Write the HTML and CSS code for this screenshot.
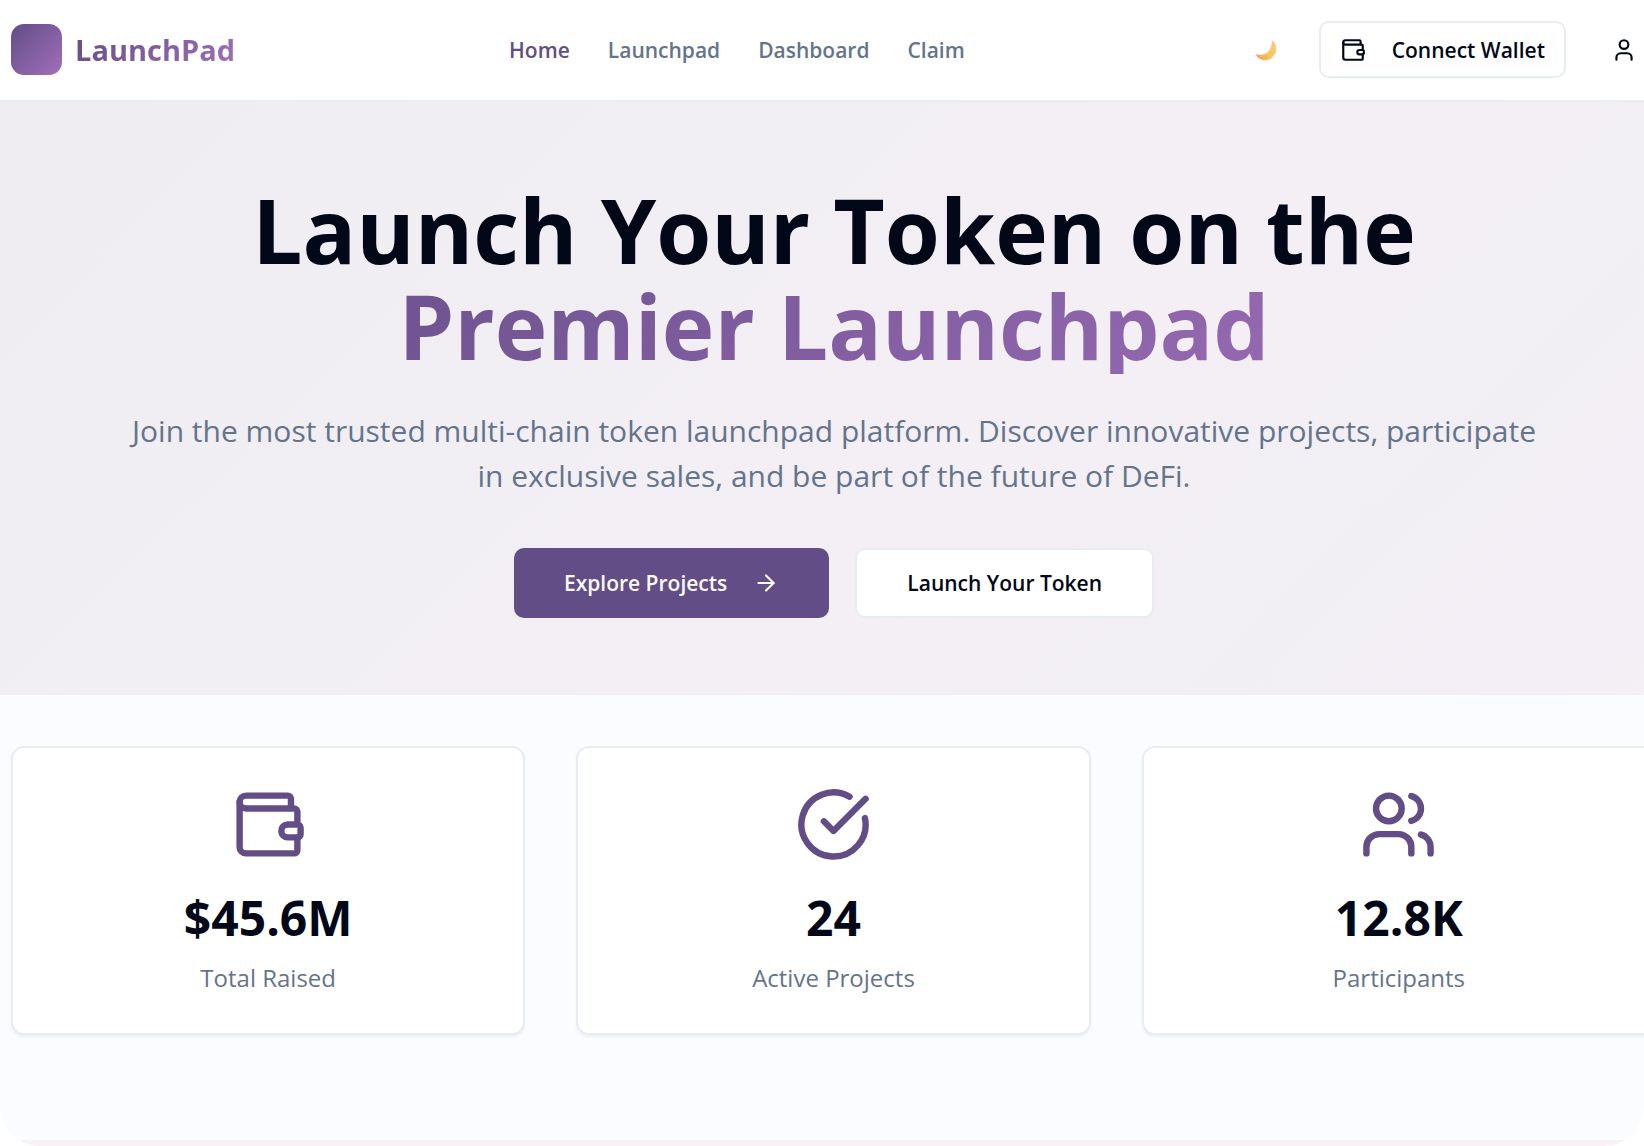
FILE: index.html
```
<!DOCTYPE html>
<html lang="en">
<head>
    <meta charset="UTF-8">
    <meta name="viewport" content="width=device-width, initial-scale=1.0">
    <title>LaunchPad</title>
    <link rel="stylesheet" href="styles.css">
</head>
<body>
    <div class="frame">
        <div class="page">
            <header class="header">
                <a href="#" class="logo">
                    <span class="logo-mark"></span>
                    <span class="logo-text gradient-text">LaunchPad</span>
                </a>
                <nav class="nav">
                    <a href="#" class="active">Home</a>
                    <a href="#">Launchpad</a>
                    <a href="#">Dashboard</a>
                    <a href="#">Claim</a>
                </nav>
                <div class="actions">
                    <button type="button" class="btn btn-ghost btn-theme" aria-label="Toggle theme">
                        <svg class="moon" viewBox="0 0 24 24">
                            <defs>
                                <linearGradient id="moonFill" x1="0" y1="1" x2="1" y2="0">
                                    <stop offset="0" stop-color="#ee9a5c"/>
                                    <stop offset="0.5" stop-color="#f9cb62"/>
                                    <stop offset="1" stop-color="#f6c98a"/>
                                </linearGradient>
                            </defs>
                            <path d="M18.2 1.2C22.6 4 24.2 9.6 22.4 14.8C20.4 20.4 15.6 23.6 10.4 23.2C6 22.8 2 20.4 0.6 16.2C5 18 10.4 17.4 14.2 13.8C17.6 10.4 18.8 5.6 18.2 1.2Z" fill="url(#moonFill)"/>
                            <circle cx="17" cy="14.5" r="1" fill="#f0b04e"/>
                            <circle cx="12" cy="19.5" r="1.2" fill="#f0b04e"/>
                        </svg>
                    </button>
                    <button type="button" class="btn btn-outline btn-wallet">
                        <svg class="icon" viewBox="0 0 24 24">
                            <path d="M19 7V4a1 1 0 0 0-1-1H5a2 2 0 0 0 0 4h15a1 1 0 0 1 1 1v4h-3a2 2 0 0 0 0 4h3a1 1 0 0 0 1-1v-2a1 1 0 0 0-1-1"/>
                            <path d="M3 5v14a2 2 0 0 0 2 2h15a1 1 0 0 0 1-1v-4"/>
                        </svg>
                        Connect Wallet
                    </button>
                    <button type="button" class="btn btn-ghost btn-user" aria-label="Account">
                        <svg class="icon" viewBox="0 0 24 24">
                            <path d="M19 21v-2a4 4 0 0 0-4-4H9a4 4 0 0 0-4 4v2"/>
                            <circle cx="12" cy="7" r="4"/>
                        </svg>
                    </button>
                </div>
            </header>

            <section class="hero">
                <h1>Launch Your Token on the <span class="gradient-text">Premier Launchpad</span></h1>
                <p>Join the most trusted multi-chain token launchpad platform. Discover innovative projects, participate in exclusive sales, and be part of the future of DeFi.</p>
                <div class="hero-buttons">
                    <button type="button" class="btn btn-primary btn-lg">
                        Explore Projects
                        <svg class="icon" viewBox="0 0 24 24">
                            <path d="M5 12h14"/>
                            <path d="m12 5 7 7-7 7"/>
                        </svg>
                    </button>
                    <button type="button" class="btn btn-outline btn-lg">Launch Your Token</button>
                </div>
            </section>

            <section class="stats">
                <div class="card">
                    <svg class="icon card-icon" viewBox="0 0 24 24">
                        <path d="M19 7V4a1 1 0 0 0-1-1H5a2 2 0 0 0 0 4h15a1 1 0 0 1 1 1v4h-3a2 2 0 0 0 0 4h3a1 1 0 0 0 1-1v-2a1 1 0 0 0-1-1"/>
                        <path d="M3 5v14a2 2 0 0 0 2 2h15a1 1 0 0 0 1-1v-4"/>
                    </svg>
                    <div class="value">$45.6M</div>
                    <div class="label">Total Raised</div>
                </div>
                <div class="card">
                    <svg class="icon card-icon" viewBox="0 0 24 24">
                        <path d="M21.801 10A10 10 0 1 1 17 3.335"/>
                        <path d="m9 11 3 3L22 4"/>
                    </svg>
                    <div class="value">24</div>
                    <div class="label">Active Projects</div>
                </div>
                <div class="card">
                    <svg class="icon card-icon" viewBox="0 0 24 24">
                        <path d="M16 21v-2a4 4 0 0 0-4-4H6a4 4 0 0 0-4 4v2"/>
                        <circle cx="9" cy="7" r="4"/>
                        <path d="M22 21v-2a4 4 0 0 0-3-3.87"/>
                        <path d="M16 3.13a4 4 0 0 1 0 7.75"/>
                    </svg>
                    <div class="value">12.8K</div>
                    <div class="label">Participants</div>
                </div>
            </section>

            <section class="next-section"></section>
        </div>
    </div>
</body>
</html>
```
FILE: styles.css
```
* {
    box-sizing: border-box;
}
body {
    margin: 0;
    background: white;
    color: #020817;
    font-family: "Open Sans", "Noto Sans", sans-serif;
    font-size: 21px;
}
/* rounded window, the page runs a little past its right edge */
.frame {
    min-height: 100vh;
    display: flex;
    overflow: hidden;
    border-radius: 0 0 40px 40px;
}
.page {
    flex: none;
    width: calc(100% + 24px);
    display: flex;
    flex-direction: column;
    background: #fafcff;
}
.header {
    display: flex;
    align-items: center;
    justify-content: space-between;
    height: 102px;
    padding: 0 12px 1px 11px;
    background: white;
    border-bottom: 2px solid #e8ecf3;
}
.logo {
    display: flex;
    align-items: center;
    gap: 13px;
    text-decoration: none;
}
.logo-mark {
    width: 51px;
    height: 51px;
    border-radius: 13px;
    background: linear-gradient(135deg, #624d86, #a16fbb);
}
.logo-text {
    font-size: 29px;
    font-weight: bold;
}
.gradient-text {
    background: linear-gradient(135deg, #624d86, #a16fbb);
    -webkit-background-clip: text;
    background-clip: text;
    color: transparent;
}
.nav {
    display: flex;
    gap: 38px;
}
.nav a {
    color: #64748b;
    font-weight: 600;
    text-decoration: none;
}
.nav a.active {
    color: #624d86;
}
.actions {
    display: flex;
    align-items: center;
    gap: 26px;
}
.btn {
    display: flex;
    align-items: center;
    justify-content: center;
    gap: 26px;
    height: 57px;
    border: none;
    border-radius: 10px;
    color: #020817;
    font-family: inherit;
    font-size: 21px;
    font-weight: 600;
    white-space: nowrap;
    cursor: pointer;
}
.btn-ghost {
    background: none;
    padding: 0;
}
.btn-theme {
    width: 54px;
}
.btn-user {
    width: 64px;
}
.btn-outline {
    background: white;
    border: 2px solid #e8ecf3;
}
.btn-wallet {
    padding: 0 19px;
}
.btn-primary {
    background: #624d86;
    color: #f8fafc;
}
.btn-lg {
    height: 70px;
    padding: 0 50px;
}
.icon {
    width: 26px;
    height: 26px;
    flex: none;
    fill: none;
    stroke: currentColor;
    stroke-width: 2;
    stroke-linecap: round;
    stroke-linejoin: round;
}
.moon {
    width: 22px;
    height: 22px;
}
.hero {
    padding: 80px 100px 77px;
    text-align: center;
    background: linear-gradient(135deg, #efedf2, #f3eff5 60%, #f1eef4 80%, #f5eff6);
}
.hero h1 {
    margin: 0 0 34px;
    font-size: 89px;
    line-height: 96px;
    font-weight: bold;
}
.hero h1 span {
    display: block;
}
.hero p {
    max-width: 1434px;
    margin: 0 auto 50px;
    color: #64748b;
    font-size: 30px;
    line-height: 45px;
}
.hero-buttons {
    display: flex;
    justify-content: center;
    gap: 26px;
}
.stats {
    display: grid;
    grid-template-columns: repeat(3, 1fr);
    gap: 51px;
    padding: 51px 12px 105px 11px;
}
.card {
    display: flex;
    flex-direction: column;
    align-items: center;
    padding: 38px 36px 36px;
    background: white;
    border: 2px solid #e8ecf3;
    border-radius: 13px;
    box-shadow: 0 2px 3px rgba(0, 0, 0, 0.05);
}
.card-icon {
    width: 77px;
    height: 77px;
    margin-bottom: 26px;
    color: #624d86;
}
.value {
    margin-bottom: 12px;
    font-size: 48px;
    line-height: 58px;
    font-weight: bold;
}
.label {
    color: #64748b;
    font-size: 24px;
    line-height: 38px;
}
.next-section {
    flex: 1;
    background: #f8f2f7;
}
```
